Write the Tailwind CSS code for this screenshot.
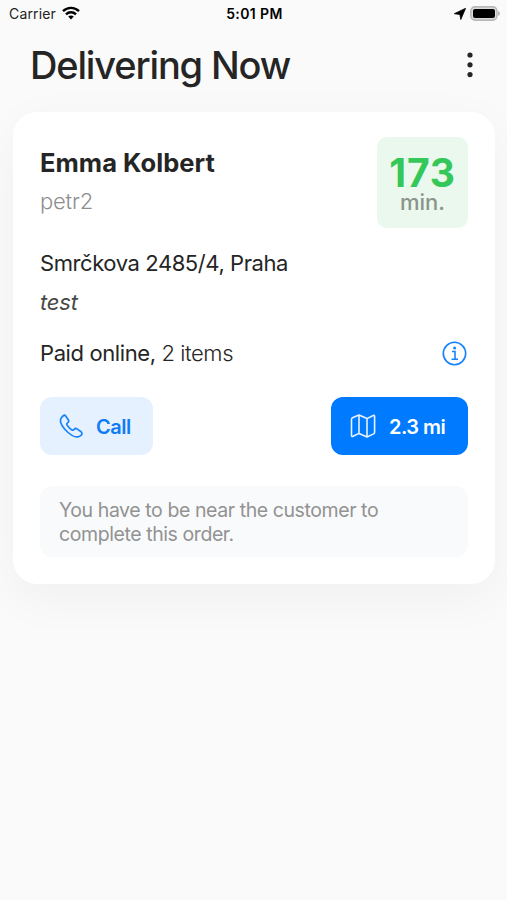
<!DOCTYPE html>
<html lang="en">
<head>
<meta charset="utf-8">
<title>Delivering Now</title>
<script src="https://cdn.jsdelivr.net/npm/@tailwindcss/browser@4"></script>
</head>
<body class="bg-[#fafafa] font-['Inter','Liberation_Sans',sans-serif] text-[#252525]">
<div class="h-[900px] w-[507px] overflow-hidden">
  <header class="grid h-7 grid-cols-3 items-center pr-[7px] pl-[9px] text-black">
    <div class="flex items-center gap-1.5">
      <span class="text-[14px] leading-7 tracking-[0.15px] text-[#222]">Carrier</span>
      <svg class="-mt-0.5 h-[14px] w-[18px]" viewBox="0 0 18 14" fill="none" stroke="#000" stroke-width="2.4"><path d="M1 5.2C5.6.7 12.4.7 17 5.2M4 8.3c2.8-2.8 7.2-2.8 10 0"/><path d="M6.2 10.5c1.6-1.5 4-1.5 5.6 0L9 13.4Z" fill="#000" stroke="none"/></svg>
    </div>
    <span class="text-center text-[14px] leading-7 font-semibold tracking-[0.4px]">5:01 PM</span>
    <div class="flex items-center justify-end gap-1">
      <svg class="h-3 w-3" viewBox="0 0 12 12"><path d="M11.6.3 6.800 11.500 5.900 6.500.3 5.700Z" stroke="#000" stroke-width=".8" stroke-linejoin="round"/></svg>
      <svg class="-mt-0.5 h-[15px] w-[30px]" viewBox="0 0 30 15"><rect x=".9" y=".9" width="26" height="13.2" rx="4" fill="#dcdcdc" stroke="#b9b9b9" stroke-width="1.6"/><rect x="3" y="3" width="22" height="9" rx="2" fill="#000"/><path d="M28 5v5q2-.7 2-2.500T28 5Z" fill="#b5b5b5"/></svg>
    </div>
  </header>

  <div class="flex h-[84px] items-start justify-between pr-[33px] pl-[30px]">
    <h1 class="mt-[13px] text-[38px] leading-[48px] font-medium tracking-[-1.150px] whitespace-nowrap">Delivering Now</h1>
    <svg class="mt-6 h-[26px] w-2" viewBox="0 0 8 26" fill="#252525"><circle cx="4" cy="3" r="2.600"/><circle cx="4" cy="12.800" r="2.600"/><circle cx="4" cy="22.600" r="2.600"/></svg>
  </div>

  <main class="mr-3 ml-[13px] h-[472px] rounded-[24px] bg-white pt-[25px] pr-[27px] pl-[27px] shadow-[0_14px_50px_rgba(0,0,0,0.042)]">
    <div class="flex h-[91px] justify-between">
      <div class="pt-[9px]">
        <h2 class="text-[25.500px] leading-[34px] font-bold tracking-[0.050px] whitespace-nowrap">Emma Kolbert</h2>
        <p class="mt-[6px] text-[22px] leading-[30px] font-light tracking-[-0.2px] text-[#8e8e8e]">petr2</p>
      </div>
      <div class="h-[91px] w-[91px] rounded-[10px] bg-[#eaf8ed] pt-[21px] text-center">
        <div class="text-[39px] leading-[29px] font-bold tracking-[0.8px] text-[#34c759]">173</div>
        <div class="mt-1 text-[22px] leading-[22px] font-medium text-[#8a948c]">min.</div>
      </div>
    </div>
    <p class="mt-[20px] text-[22px] leading-[30px] tracking-[-0.420px] whitespace-nowrap">Smrčkova 2485/4, Praha</p>
    <p class="mt-[9px] text-[22px] leading-[30px] tracking-[-0.2px] text-[#484848] italic">test</p>
    <div class="mt-[21px] flex h-[30px] items-center justify-between">
      <p class="text-[22px] leading-[30px] tracking-[-0.4px] whitespace-nowrap">Paid online, <span class="font-light">2 items</span></p>
      <svg class="mr-[1px] h-[25px] w-[25px]" viewBox="0 0 25 25" fill="none" stroke="#1783fa" stroke-width="1.600"><circle cx="12.500" cy="12.500" r="11.200"/><path d="M10 10.500h3v7.700M9.500 18.200h6.500"/><circle cx="12.600" cy="6.900" r="1.500" fill="#1783fa" stroke="none"/></svg>
    </div>
    <div class="mt-[29px] flex h-[58px] justify-between">
      <button class="flex w-[113px] items-center rounded-[12px] bg-[#e5f1ff] pl-[19px] text-[#0f7cf5]">
        <svg class="h-6 w-6" viewBox="0 0 24 24" fill="none" stroke="#1783fa" stroke-width="1.700" stroke-linejoin="round"><path d="M2 4.400C3.200 2.500 5.300.1 6.700 1.900L9.400 5.900C10.300 7.400 9.500 8.200 8.300 9.100 7.200 10 7.700 10.800 8.700 12.100 9.900 13.700 11.300 15 12.600 15.800 13.700 16.500 14.300 16.400 15 15.500 16 14.300 16.900 14.200 18 14.900L22.100 17.800C23.500 19 23.200 20.600 21.300 21.900 17.800 24.300 12.400 21.700 8 17.500 3.500 13.200.2 8.200 2 4.400Z"/></svg>
        <span class="mt-px ml-[13px] text-[20px] leading-[28px] font-semibold tracking-[-0.5px]">Call</span>
      </button>
      <button class="flex w-[137px] items-center rounded-[12px] bg-[#007aff] pl-[19px] text-white">
        <svg class="h-6 w-[26px]" viewBox="0 0 26 24" fill="none" stroke="#e8f3ff" stroke-width="1.600" stroke-linejoin="round"><path d="M1.500 5.200Q1.500 4.200 2.500 3.700L9 1 17 4.600 23.200 1.500Q24.600 1 24.600 2.500V18.200Q24.600 19.400 23.600 19.900L17 23 9 19.400 3 22.300Q1.500 22.900 1.500 21.500ZM9 1V19.400M17 4.600V23"/></svg>
        <span class="mt-px ml-[13px] text-[20px] leading-[28px] font-semibold tracking-[-0.5px] whitespace-nowrap">2.3 mi</span>
      </button>
    </div>
    <div class="mt-[31px] h-[71px] rounded-[12px] bg-[#f9fafb] pt-[13px] pl-[19px]">
      <p class="text-[19.500px] leading-[23.500px] tracking-[-0.420px] whitespace-nowrap text-[#929292]">You have to be near the customer to<br>complete this order.</p>
    </div>
  </main>
</div>
</body>
</html>
